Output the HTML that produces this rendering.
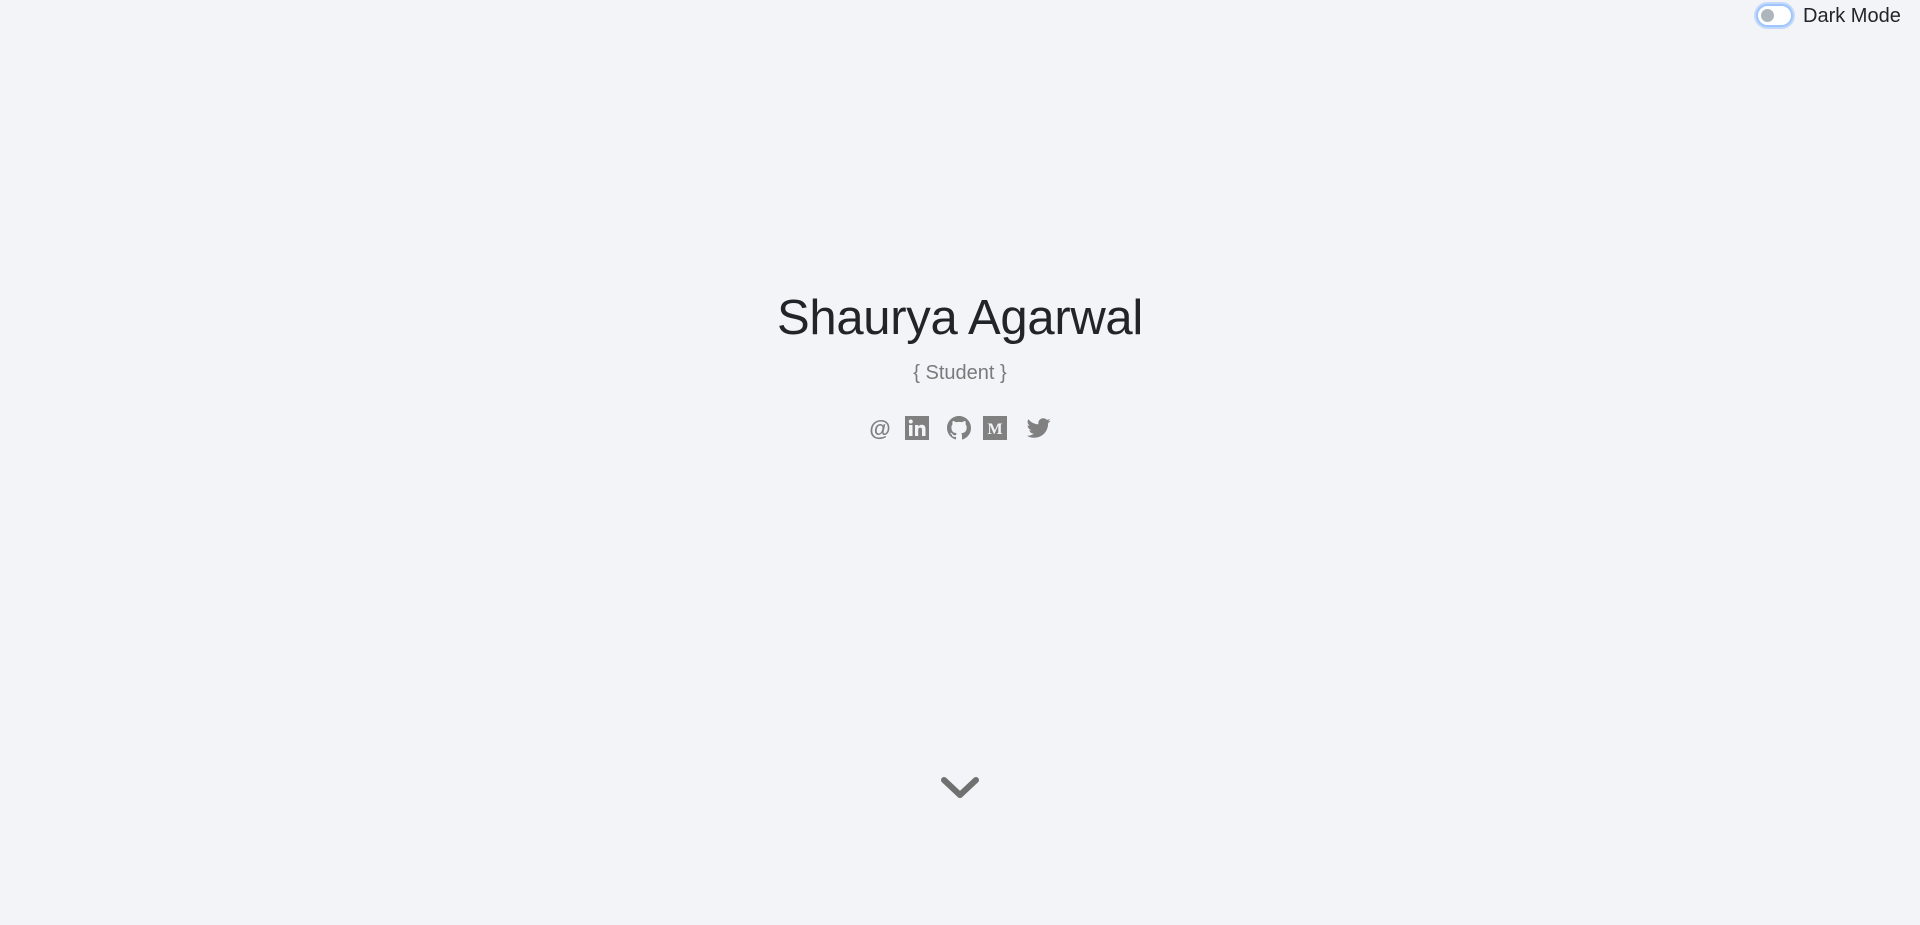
<!DOCTYPE html>
<html><head><meta charset="utf-8"><style>
html,body{margin:0;padding:0;width:1920px;height:925px;background:#f2f4f8;overflow:hidden;font-family:"Liberation Sans",sans-serif}
.t{position:absolute;left:0;width:1920px;text-align:center}
h1{margin:0;font-weight:400;font-size:49px;color:#212529;top:290px;letter-spacing:-0.3px}
.sub{top:362px;font-size:20px;color:#7a7a7a}
.icons{position:absolute;top:416px;left:0;width:1920px;height:24px}
.icons svg{position:absolute;top:0}
.at{position:absolute;left:868px;top:0px;width:24px;text-align:center;font-weight:bold;font-size:22px;color:#808080;line-height:26px}
.tog{position:absolute;left:1756px;top:4px;width:37px;height:23px;border-radius:12px;border:2px solid #9ec5fe;box-sizing:border-box;background:#fff;box-shadow:0 0 0 2px rgba(13,110,253,.2)}
.tog:after{content:"";position:absolute;left:3px;top:3px;width:13px;height:13px;border-radius:50%;background:#adb5bd}
.dm{position:absolute;left:1803px;top:5px;font-size:20px;color:#212529}
</style></head><body>
<div class="tog"></div><div class="dm">Dark Mode</div>
<h1 class="t">Shaurya Agarwal</h1>
<div class="t sub">{ Student }</div>
<div class="icons">
<div class="at">@</div>
<svg style="left:905px" width="24" height="24" viewBox="0 0 24 24"><rect width="24" height="24" fill="#808080"/><rect x="4" y="9" width="3.5" height="11" fill="#f2f4f8"/><circle cx="5.75" cy="5.5" r="2" fill="#f2f4f8"/><path d="M10 9h3.3v1.6c.6-1 1.8-1.9 3.6-1.9 3 0 3.6 2 3.6 4.6V20H17v-5.6c0-1.3-.1-2.8-1.8-2.8s-2 1.3-2 2.7V20H10z" fill="#f2f4f8"/></svg>
<svg style="left:947px" width="24" height="24" viewBox="0 0 16 16"><path fill="#808080" d="M8 0C3.58 0 0 3.580 0 8c0 3.54 2.29 6.53 5.47 7.59.4.07.55-.17.55-.38v-1.330c-2.230.48-2.7-1.07-2.7-1.07-.36-.92-.89-1.17-.89-1.17-.73-.5.06-.49.06-.49.8.06 1.23.83 1.23.83.71 1.22 1.87.87 2.33.66.07-.52.28-.87.51-1.07-1.78-.2-3.64-.89-3.64-3.95 0-.87.31-1.59.82-2.15-.08-.2-.36-1.02.08-2.12 0 0 .67-.21 2.2.82.64-.18 1.32-.27 2-.27.68 0 1.36.09 2 .27 1.53-1.04 2.2-.82 2.2-.82.44 1.1.16 1.92.08 2.12.51.56.82 1.27.82 2.15 0 3.07-1.87 3.75-3.65 3.95.29.25.54.73.54 1.48v2.2c0 .21.15.46.55.38A8.013 8.013 0 0016 8c0-4.42-3.58-8-8-8z"/></svg>
<svg style="left:983px" width="24" height="24" viewBox="0 0 24 24"><rect width="24" height="24" fill="#808080"/><text x="12" y="18" text-anchor="middle" font-family="Liberation Serif" font-weight="bold" font-size="16" fill="#f2f4f8">M</text></svg>
<svg style="left:1026px" width="26" height="24" viewBox="0 0 24 24"><path fill="#808080" d="M23.6 4.6c-.9.4-1.8.6-2.8.8 1-.6 1.8-1.600 2.1-2.7-.9.6-2 1-3.1 1.2C18.9 2.9 17.6 2.3 16.2 2.3c-2.7 0-4.9 2.2-4.9 4.9 0 .4 0 .8.1 1.1C7.3 8.1 3.7 6.1 1.3 3.2.9 3.9.6 4.8.6 5.7c0 1.7.9 3.2 2.2 4.1-.8 0-1.6-.2-2.2-.6v.1c0 2.4 1.7 4.4 3.9 4.8-.4.1-.8.2-1.3.2-.3 0-.6 0-.9-.1.6 2 2.4 3.4 4.6 3.4-1.7 1.3-3.8 2.1-6.1 2.1-.4 0-.8 0-1.2-.1 2.2 1.4 4.8 2.2 7.5 2.2 9.1 0 14-7.500 14-14v-.6c1-.7 1.8-1.6 2.5-2.6z"/></svg>
</div>
<svg style="position:absolute;left:940px;top:775px" width="40" height="28" viewBox="0 0 40 28"><path d="M4 5L20 20L36 5" fill="none" stroke="#707070" stroke-width="6" stroke-linecap="round" stroke-linejoin="round"/></svg>
</body></html>
